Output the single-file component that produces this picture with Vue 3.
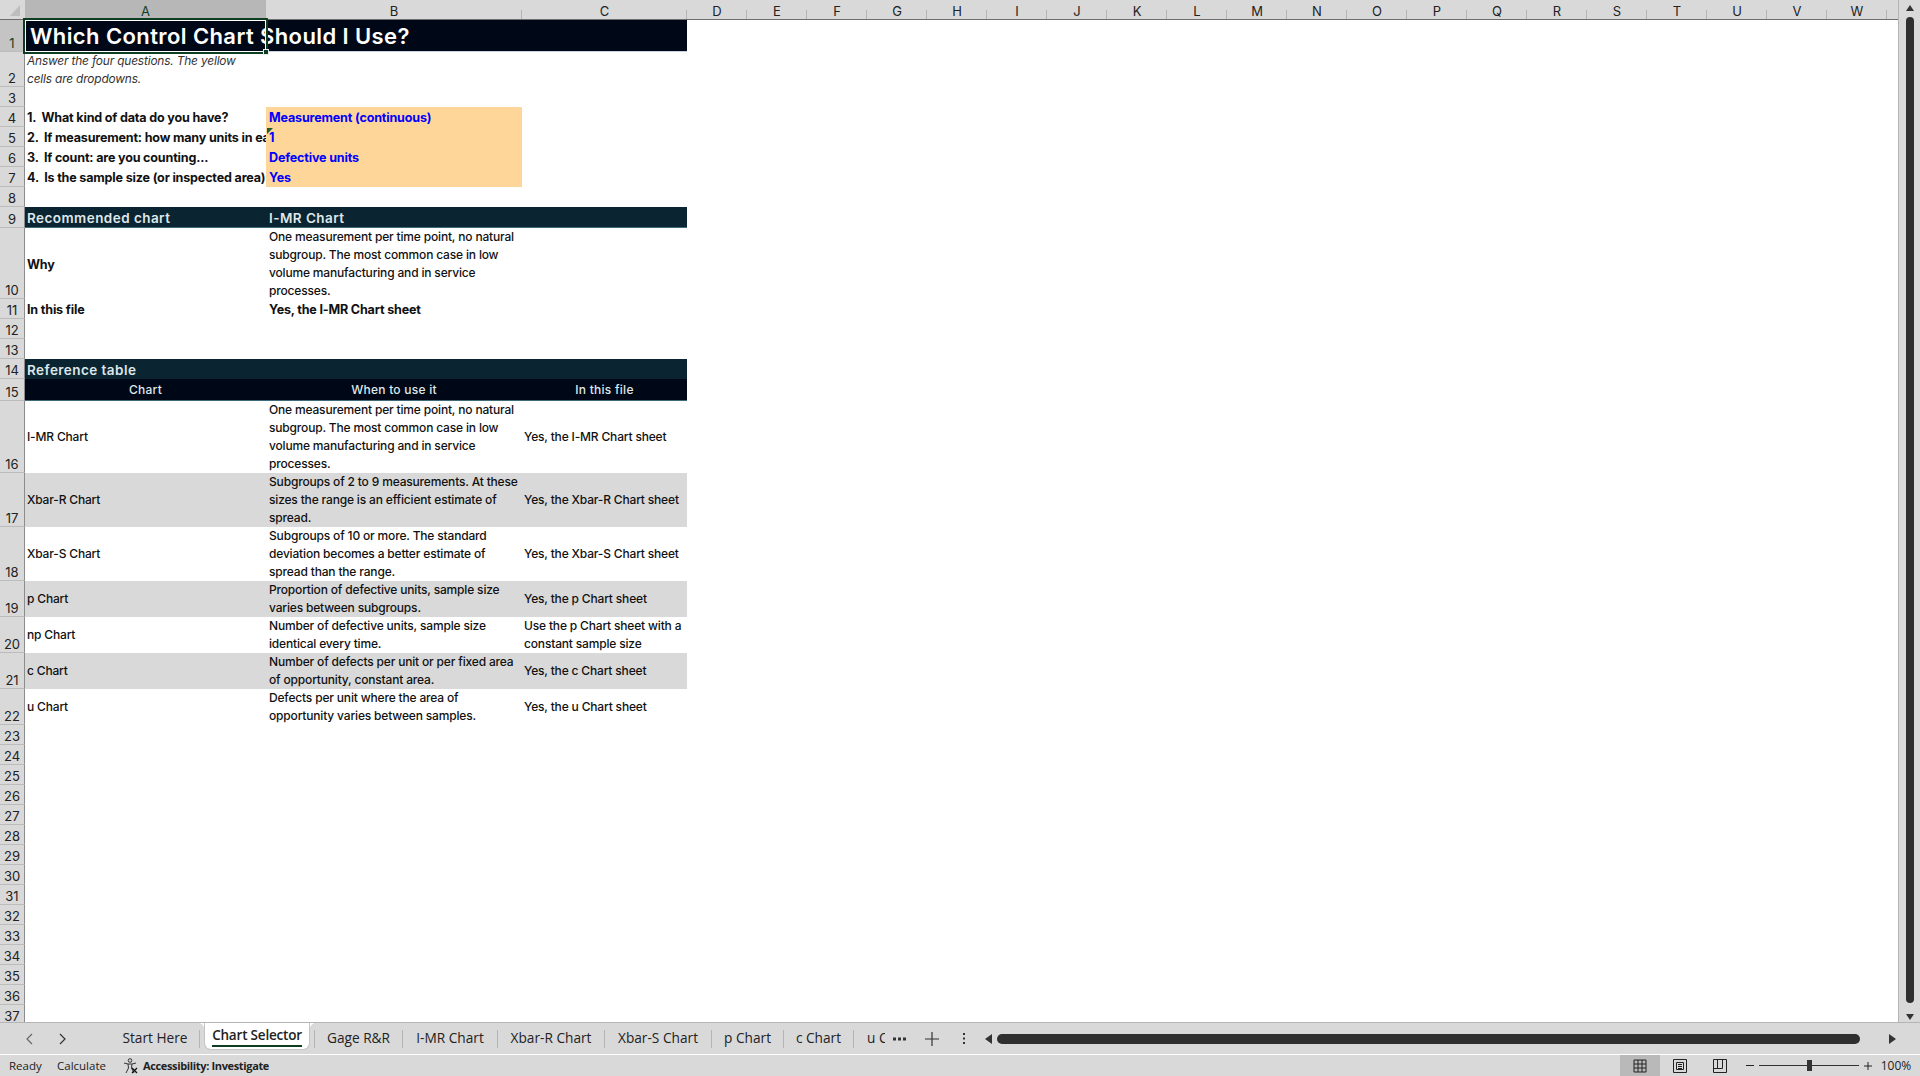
<template>
  <div class="excel">
    <div class="workspace">
      <div class="sheet">
        <div class="colheads">
          <div class="corner">
            <svg width="25" height="19" viewBox="0 0 25 19"><path d="M10 16 L20 16 L20 5 Z" fill="#bdbdbd" /></svg>
          </div>
          <div
            v-for="col in columns"
            :key="col.name"
            :class="['colhead', { 'colhead-active': col.name === 'A' }]"
            :style="{ width: col.width + 'px' }"
          >{{ col.name }}</div>
        </div>

        <div class="rows">
          <div v-for="row in rows" :key="row.n" class="row" :style="{ height: row.h + 'px' }">
            <div :class="['rowhead', { 'rowhead-active': row.n === 1 }]">{{ row.n }}</div>
            <div :class="['cells', row.band]">
              <div
                v-for="(cell, i) in row.cells"
                :key="i"
                :class="['cell', cell.cls]"
              >
                <div v-for="line in cell.lines" :key="line" class="line">{{ line }}</div>
                <span v-if="cell.marker" class="marker"></span>
                <span v-if="cell.selected" class="selection"><i class="handle"></i></span>
              </div>
            </div>
          </div>
        </div>
      </div>

      <div class="vscroll">
        <svg width="22" height="12" viewBox="0 0 22 12"><path d="M7 11 L11 5 L15 11 Z" fill="#333" /></svg>
        <div class="vthumb"></div>
        <svg width="22" height="10" viewBox="0 0 22 10"><path d="M7 2 L15 2 L11 8 Z" fill="#333" /></svg>
      </div>
    </div>

    <div class="tabbar">
      <div class="tabnav">
        <svg width="10" height="14" viewBox="0 0 10 14"><path d="M7 2 L2 7 L7 12" fill="none" stroke="#666" stroke-width="1.2" /></svg>
        <svg width="10" height="14" viewBox="0 0 10 14"><path d="M3 2 L8 7 L3 12" fill="none" stroke="#333" stroke-width="1.2" /></svg>
      </div>
      <div class="tabs">
        <div
          v-for="tab in tabs"
          :key="tab.name"
          :class="['tab', { 'tab-active': tab.active, 'tab-cut': tab.cut }]"
          :style="{ width: tab.width + 'px' }"
        ><span>{{ tab.name }}</span></div>
      </div>
      <div class="tabtools">
        <svg class="dots" width="13" height="4" viewBox="0 0 13 4"><path d="M0 .5 H3 V3.5 H0 Z M5 .5 H8 V3.5 H5 Z M10 .5 H13 V3.5 H10 Z" fill="#333" /></svg>
        <svg class="plus" width="14" height="14" viewBox="0 0 14 14"><path d="M7 0 V14 M0 7 H14" stroke="#333" stroke-width="1.2" /></svg>
        <svg class="kebab" width="4" height="11" viewBox="0 0 4 11"><path d="M1 0 H3 V2 H1 Z M1 4.5 H3 V6.5 H1 Z M1 9 H3 V11 H1 Z" fill="#333" /></svg>
        <svg class="arrow-left" width="8" height="10" viewBox="0 0 8 10"><path d="M7 0 V10 L0 5 Z" fill="#333" /></svg>
      </div>
      <div class="hthumb"></div>
      <svg class="arrow-right" width="8" height="10" viewBox="0 0 8 10"><path d="M0 0 V10 L7 5 Z" fill="#333" /></svg>
    </div>

    <div class="statusbar">
      <span class="ready">Ready</span>
      <span class="calculate">Calculate</span>
      <svg class="a11y" width="15" height="16" viewBox="0 0 15 16">
        <circle cx="7" cy="2.5" r="1.8" fill="none" stroke="#333" />
        <path d="M1 5 L5 6 H9 L13 5 M5 6 L5.5 10 L3 15 M9 6 L8.5 10 L11 15" fill="none" stroke="#333" />
        <path d="M9 10 L14 15 M14 10 L9 15" stroke="#111" stroke-width="1.3" />
      </svg>
      <span class="a11y-text">Accessibility: Investigate</span>
      <div class="status-right">
        <div class="view view-active">
          <svg width="14" height="14" viewBox="0 0 14 14"><path d="M1 1 H13 V13 H1 Z M5 1 V13 M9 1 V13 M1 5 H13 M1 9 H13" fill="none" stroke="#222" /></svg>
        </div>
        <div class="view">
          <svg width="14" height="14" viewBox="0 0 14 14"><path d="M.5 .5 H13.5 V13.5 H.5 Z M3.5 3.5 H10.5 V10.5 H3.5 Z M5 5.5 H9 M5 7.5 H9 M5 9.5 H9" fill="none" stroke="#222" /></svg>
        </div>
        <div class="view">
          <svg width="14" height="14" viewBox="0 0 14 14"><path d="M.5 .5 H13.5 V13.5 H.5 Z M.5 9.5 H9.5 V.5 M4.5 .5 V9.5" fill="none" stroke="#222" /></svg>
        </div>
        <div class="zoomer">
          <span class="zoom-minus"></span>
          <div class="slider"><i class="slider-thumb"></i></div>
          <svg width="8" height="8" viewBox="0 0 8 8"><path d="M4 0 V8 M0 4 H8" stroke="#222" /></svg>
        </div>
        <span class="percent">100%</span>
      </div>
    </div>
  </div>
</template>

<script setup>
const letters = 'DEFGHIJKLMNOPQRSTUVW'.split('')
const columns = [
  { name: 'A', width: 241 },
  { name: 'B', width: 256 },
  { name: 'C', width: 165 },
  ...letters.map((name) => ({ name, width: 60 })),
]

const plain = (text) => ({ lines: Array.isArray(text) ? text : [text] })
const imr = ['One measurement per time point, no natural', 'subgroup. The most common case in low', 'volume manufacturing and in service', 'processes.']

const rows = [
  { n: 1, h: 32, band: 'band-title', cells: [{ lines: ['Which Control Chart Should I Use?'], cls: 'title', selected: true }] },
  { n: 2, h: 35, cells: [{ lines: ['Answer the four questions. The yellow', 'cells are dropdowns.'], cls: 'note' }] },
  { n: 3, h: 20 },
  { n: 4, h: 20, cells: [{ lines: ['1.  What kind of data do you have?'], cls: 'bold' }, { lines: ['Measurement (continuous)'], cls: 'input' }] },
  { n: 5, h: 20, cells: [{ lines: ['2.  If measurement: how many units in each sample?'], cls: 'bold' }, { lines: ['1'], cls: 'input', marker: true }] },
  { n: 6, h: 20, cells: [{ lines: ['3.  If count: are you counting...'], cls: 'bold' }, { lines: ['Defective units'], cls: 'input' }] },
  { n: 7, h: 20, cells: [{ lines: ['4.  Is the sample size (or inspected area) constant?'], cls: 'bold' }, { lines: ['Yes'], cls: 'input' }] },
  { n: 8, h: 20 },
  { n: 9, h: 21, band: 'band-teal', cells: [{ lines: ['Recommended chart'], cls: 'head' }, { lines: ['I-MR Chart'], cls: 'head' }] },
  { n: 10, h: 71, cells: [{ lines: ['Why'], cls: 'bold' }, plain(imr)] },
  { n: 11, h: 20, cells: [{ lines: ['In this file'], cls: 'bold' }, { lines: ['Yes, the I-MR Chart sheet'], cls: 'bold' }] },
  { n: 12, h: 20 },
  { n: 13, h: 20 },
  { n: 14, h: 20, band: 'band-teal-flat', cells: [{ lines: ['Reference table'], cls: 'head' }] },
  { n: 15, h: 22, band: 'band-navy', cells: [{ lines: ['Chart'], cls: 'colname' }, { lines: ['When to use it'], cls: 'colname' }, { lines: ['In this file'], cls: 'colname' }] },
  { n: 16, h: 72, cells: [plain('I-MR Chart'), plain(imr), plain('Yes, the I-MR Chart sheet')] },
  { n: 17, h: 54, band: 'band-gray', cells: [plain('Xbar-R Chart'), plain(['Subgroups of 2 to 9 measurements. At these', 'sizes the range is an efficient estimate of', 'spread.']), plain('Yes, the Xbar-R Chart sheet')] },
  { n: 18, h: 54, cells: [plain('Xbar-S Chart'), plain(['Subgroups of 10 or more. The standard', 'deviation becomes a better estimate of', 'spread than the range.']), plain('Yes, the Xbar-S Chart sheet')] },
  { n: 19, h: 36, band: 'band-gray', cells: [plain('p Chart'), plain(['Proportion of defective units, sample size', 'varies between subgroups.']), plain('Yes, the p Chart sheet')] },
  { n: 20, h: 36, cells: [plain('np Chart'), plain(['Number of defective units, sample size', 'identical every time.']), plain(['Use the p Chart sheet with a', 'constant sample size'])] },
  { n: 21, h: 36, band: 'band-gray', cells: [plain('c Chart'), plain(['Number of defects per unit or per fixed area', 'of opportunity, constant area.']), plain('Yes, the c Chart sheet')] },
  { n: 22, h: 36, cells: [plain('u Chart'), plain(['Defects per unit where the area of', 'opportunity varies between samples.']), plain('Yes, the u Chart sheet')] },
  ...Array.from({ length: 15 }, (_, i) => ({ n: 23 + i, h: 20 })),
]

const tabs = [
  { name: 'Start Here', width: 93 },
  { name: 'Chart Selector', width: 106, active: true },
  { name: 'Gage R&R', width: 89 },
  { name: 'I-MR Chart', width: 95 },
  { name: 'Xbar-R Chart', width: 107 },
  { name: 'Xbar-S Chart', width: 107 },
  { name: 'p Chart', width: 72 },
  { name: 'c Chart', width: 70 },
  { name: 'u Chart', width: 31, cut: true },
]
</script>

<style>
html,
body {
  margin: 0;
  background: #fff;
  overflow: hidden;
}
</style>

<style scoped>
.excel {
  width: 1920px;
  height: 1076px;
  display: flex;
  flex-direction: column;
  overflow: hidden;
  font-family: Inter, 'Liberation Sans', sans-serif;
  color: #111;
  background: #d9d9d9;
}

.workspace {
  display: flex;
  height: 1022px;
  flex: none;
  border-bottom: 1px solid #b4b4b4;
  box-sizing: content-box;
}

.sheet {
  width: 1898px;
  height: 1022px;
  overflow: hidden;
  background: #fff;
  flex: none;
}

.colheads {
  display: flex;
  height: 19px;
  background: #d9d9d9;
  border-bottom: 1px solid #6e6e6e;
  box-sizing: content-box;
}

.corner {
  width: 25px;
  height: 19px;
  flex: none;
}

.colhead {
  flex: none;
  height: 19px;
  line-height: 22px;
  text-align: center;
  font-size: 13px;
  color: #222;
  position: relative;
}

.colhead::after {
  content: '';
  position: absolute;
  right: 0;
  bottom: 0;
  width: 1px;
  height: 9px;
  background: #b4b4b4;
}

.colhead-active {
  background: #b7b7b7;
  color: #0f3d22;
}

.row {
  display: flex;
}

.rowhead {
  width: 25px;
  flex: none;
  box-sizing: border-box;
  background: #d9d9d9;
  border-right: 1px solid #8c8c8c;
  border-bottom: 1px solid #bcbcbc;
  display: flex;
  align-items: flex-end;
  justify-content: center;
  font-size: 13px;
  line-height: 15px;
  color: #222;
}

.rowhead-active {
  background: #c4c4c4;
  color: #0f3d22;
}

.cells {
  width: 662px;
  flex: none;
  box-sizing: border-box;
  display: grid;
  grid-template-columns: 241px 256px 165px;
}

.band-title {
  background: #000818;
  border-bottom: 1px solid #c9d3e6;
}

.band-navy {
  background: #000818;
  border-bottom: 1px solid #3f6b78;
}

.band-teal {
  background: #0a2431;
  border-bottom: 1px solid #3f6b78;
}

.band-teal-flat {
  background: #0a2431;
}

.band-gray {
  background: #d9d9d9;
}

.cell {
  position: relative;
  min-width: 0;
  display: flex;
  flex-direction: column;
  justify-content: center;
  padding-left: 3px;
  overflow: hidden;
  font-size: 12px;
  font-weight: 500;
  letter-spacing: -0.17px;
}

.cell:first-child {
  padding-left: 2px;
}

.cell:nth-child(3) {
  padding-left: 2px;
}

.line {
  line-height: 18px;
  white-space: pre;
}

.bold {
  font-size: 12.55px;
  font-weight: 700;
  padding-top: 2px;
}

.note {
  font-style: italic;
  font-weight: 400;
  font-size: 11.9px;
  color: #333;
  justify-content: flex-start;
}

.input {
  background: #ffd699;
  color: #0000ff;
  font-size: 12.55px;
  font-weight: 700;
  padding-top: 2px;
}

.head {
  color: #dfe7ea;
  font-weight: 600;
  font-size: 13.5px;
  letter-spacing: 0.45px;
  padding-top: 2px;
}

.cell.colname {
  color: #dfe7ea;
  font-weight: 500;
  text-align: center;
  letter-spacing: 0.25px;
  padding-left: 0;
}

.cell.title {
  overflow: visible;
  padding-left: 5px;
  color: #fff;
  font-size: 22px;
  font-weight: 600;
  letter-spacing: 0.4px;
}

.title .line {
  line-height: 32px;
}

.marker {
  position: absolute;
  left: 1px;
  top: 1px;
  width: 0;
  height: 0;
  border-top: 6px solid #1e5c2e;
  border-right: 6px solid transparent;
}

.selection {
  position: absolute;
  left: -2px;
  top: -2px;
  right: -2px;
  bottom: -2px;
  box-sizing: border-box;
  border: 2px solid #0f3d22;
  outline: 1px solid #fff;
  outline-offset: -3px;
  z-index: 2;
}

.handle {
  position: absolute;
  right: -3px;
  bottom: -3px;
  width: 4px;
  height: 4px;
  background: #0f3d22;
  border: 1px solid #e8e8f0;
}

.vscroll {
  width: 22px;
  height: 1022px;
  flex: none;
  box-sizing: border-box;
  border-left: 1px solid #b4b4b4;
  display: flex;
  flex-direction: column;
  align-items: center;
}

.vthumb {
  width: 8px;
  height: 986px;
  margin: 5px 0 9px;
  border-radius: 4px;
  background: #2f2f2f;
  flex: none;
}

.tabbar {
  height: 31px;
  flex: none;
  display: flex;
  align-items: center;
  border-bottom: 1px solid #fff;
  font-family: 'Open Sans', 'Liberation Sans', sans-serif;
  font-size: 13.7px;
  color: #222;
}

.tabnav {
  width: 107px;
  box-sizing: border-box;
  padding-left: 25px;
  display: flex;
  gap: 22px;
  flex: none;
}

.tabs {
  display: flex;
  align-items: center;
  height: 100%;
  flex: none;
}

.tab {
  height: 18px;
  line-height: 16px;
  flex: none;
  box-sizing: border-box;
  text-align: center;
  border-right: 1px solid #b4b4b4;
  white-space: nowrap;
  overflow: hidden;
}

.tab:first-child {
  padding-left: 4px;
}

.tab-active + .tab {
  border-left: 1px solid #b4b4b4;
}

.tab.tab-active {
  height: 27px;
  margin: 0 4px;
  align-self: flex-start;
  background: #fff;
  border: 1px solid #c4c4c4;
  border-top: 0;
  border-radius: 0 0 7px 7px;
  font-size: 13.5px;
  font-weight: 600;
  letter-spacing: -0.2px;
  line-height: 24px;
  position: relative;
  overflow: visible;
}

.tab-active::before,
.tab-active::after {
  content: '';
  position: absolute;
  top: 0;
  width: 5px;
  height: 5px;
}

.tab-active::before {
  left: -6px;
  background: radial-gradient(circle at 0 100%, transparent 4.5px, #fff 5px);
}

.tab-active::after {
  right: -6px;
  background: radial-gradient(circle at 100% 100%, transparent 4.5px, #fff 5px);
}

.tab-active span {
  display: inline-block;
  height: 22px;
  border-bottom: 2px solid #0f3d22;
}

.tab-cut {
  border-right: 0;
  text-align: left;
  padding-left: 13px;
}

.tabtools {
  display: flex;
  align-items: center;
  flex: none;
  margin-left: 8px;
}

.plus {
  margin-left: 19px;
}

.kebab {
  margin-left: 23px;
}

.arrow-left {
  margin-left: 19px;
}

.hthumb {
  width: 863px;
  height: 10px;
  margin-left: 4px;
  border-radius: 5px;
  background: #2f2f2f;
  flex: none;
}

.arrow-right {
  margin-left: 29px;
  flex: none;
}

.statusbar {
  height: 22px;
  flex: 1;
  display: flex;
  align-items: center;
  font-family: 'Open Sans', 'Liberation Sans', sans-serif;
  font-size: 11.5px;
  color: #222;
}

.ready {
  margin-left: 9px;
  width: 48px;
}

.calculate {
  width: 66px;
}

.a11y-text {
  margin-left: 5px;
  font-size: 11px;
  font-weight: 700;
  letter-spacing: -0.35px;
  color: #222;
}

.status-right {
  margin-left: auto;
  display: flex;
  align-items: center;
  height: 100%;
}

.view {
  width: 40px;
  height: 100%;
  display: flex;
  align-items: center;
  justify-content: center;
}

.view-active {
  background: #b9b9b9;
}

.zoomer {
  display: flex;
  align-items: center;
  margin-left: 6px;
  gap: 5px;
}

.zoom-minus {
  width: 8px;
  height: 1px;
  background: #222;
}

.slider {
  width: 100px;
  height: 1px;
  background: #333;
  position: relative;
}

.slider-thumb {
  position: absolute;
  left: 48px;
  top: -5px;
  width: 5px;
  height: 11px;
  background: #333;
}

.percent {
  width: 48px;
  text-align: center;
  font-size: 12px;
}
</style>
